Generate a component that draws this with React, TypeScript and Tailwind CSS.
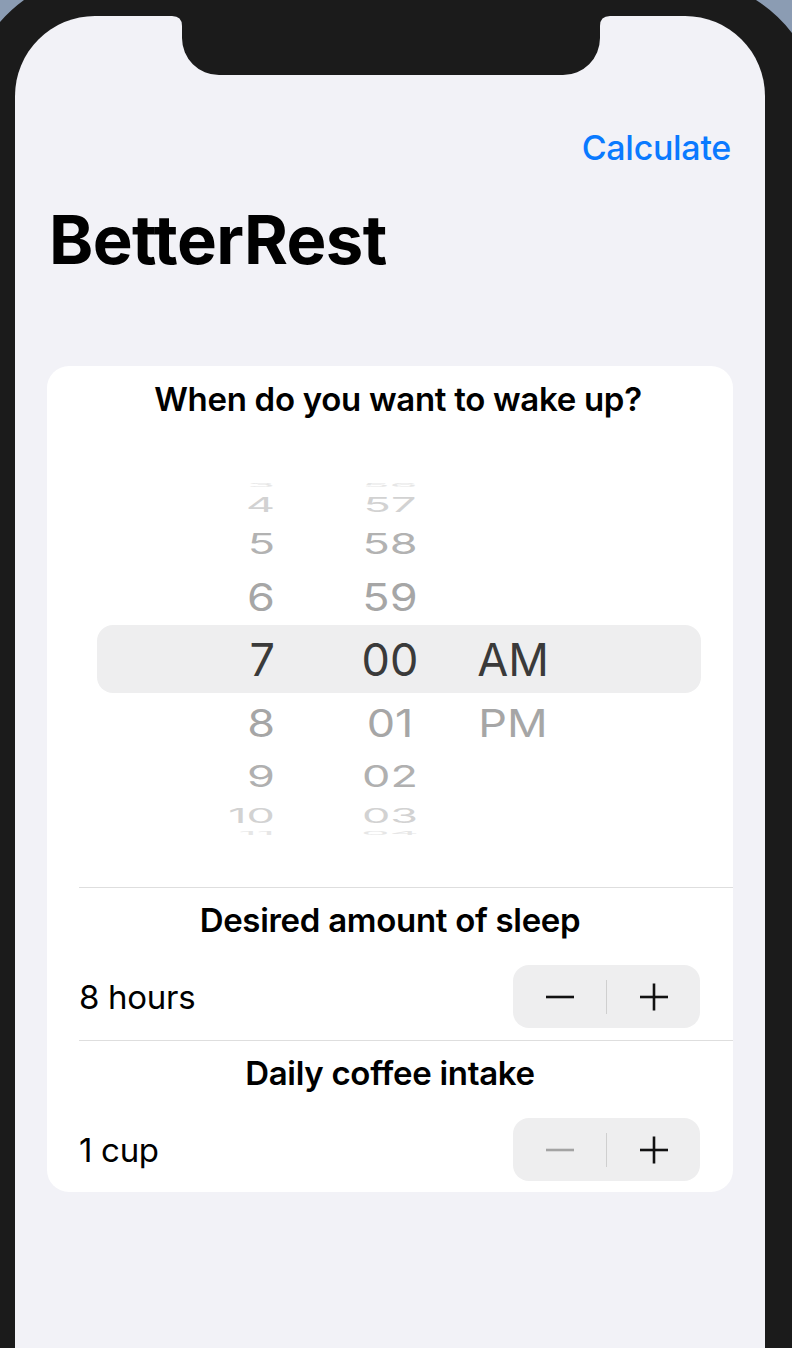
import React from "react";

const font = "font-[family-name:Inter,ui-sans-serif,sans-serif]";

type PickerRow = {
  hour: string;
  minute: string;
  period: string;
  height: string;
  scale: string;
  color: string;
};

const rows: PickerRow[] = [
  { hour: "3", minute: "56", period: "", height: "h-[8px]", scale: "scale-y-[0.12]", color: "text-[#e6e6e6]" },
  { hour: "4", minute: "57", period: "", height: "h-[30px]", scale: "scale-y-[0.45]", color: "text-[#d2d2d2]" },
  { hour: "5", minute: "58", period: "", height: "h-[48px]", scale: "scale-y-[0.64]", color: "text-[#b2b2b2]" },
  { hour: "6", minute: "59", period: "", height: "h-[58px]", scale: "scale-y-[0.85]", color: "text-[#a6a6a6]" },
  { hour: "7", minute: "00", period: "AM", height: "h-[68px]", scale: "scale-y-100", color: "text-[#3a3a3a]" },
  { hour: "8", minute: "01", period: "PM", height: "h-[58px]", scale: "scale-y-[0.85]", color: "text-[#a6a6a6]" },
  { hour: "9", minute: "02", period: "", height: "h-[50px]", scale: "scale-y-[0.66]", color: "text-[#b0b0b0]" },
  { hour: "10", minute: "03", period: "", height: "h-[28px]", scale: "scale-y-[0.44]", color: "text-[#d2d2d2]" },
  { hour: "11", minute: "04", period: "", height: "h-[8px]", scale: "scale-y-[0.12]", color: "text-[#e6e6e6]" },
];

function WheelPicker() {
  return (
    <div className="mt-[62px] flex flex-col">
      {rows.map((row, i) => (
        <div
          key={row.hour}
          className={`ml-[50px] mr-[32px] flex items-center text-[45px] leading-none ${row.height} ${row.color} ${
            i === 4 ? "rounded-[16px] bg-[#eeeeef]" : ""
          }`}
        >
          <span className={`block w-[178px] text-right ${row.scale}`}>{row.hour}</span>
          <span className={`ml-[55px] block w-[120px] text-center ${row.scale}`}>{row.minute}</span>
          <span className={`ml-[3px] block w-[120px] text-center ${row.scale}`}>{row.period}</span>
        </div>
      ))}
    </div>
  );
}

function Stepper({ minusDisabled }: { minusDisabled?: boolean }) {
  return (
    <div className="flex h-[63px] w-[187px] items-center rounded-[16px] bg-[#eeeeef]">
      <div className="flex flex-1 justify-center">
        <svg width="30" height="30" viewBox="0 0 30 30">
          <line
            x1="1"
            y1="15"
            x2="29"
            y2="15"
            stroke={minusDisabled ? "#a3a3a3" : "#111"}
            strokeWidth="2.6"
          />
        </svg>
      </div>
      <div className="h-[34px] w-px bg-[#cfcfcf]" />
      <div className="flex flex-1 justify-center">
        <svg width="30" height="30" viewBox="0 0 30 30">
          <line x1="1" y1="15" x2="29" y2="15" stroke="#111" strokeWidth="2.6" />
          <line x1="15" y1="1.5" x2="15" y2="28.5" stroke="#111" strokeWidth="2.6" />
        </svg>
      </div>
    </div>
  );
}

function Section({ title, value, minusDisabled }: { title: string; value: string; minusDisabled?: boolean }) {
  return (
    <div>
      <h2 className="mt-[12px] text-center text-[33px] font-semibold leading-[40px] tracking-[-0.3px] text-black">
        {title}
      </h2>
      <div className="mt-[25px] flex items-center justify-between pl-[32px] pr-[33px]">
        <span className="text-[33px] leading-[40px] tracking-[-0.3px] text-black">{value}</span>
        <Stepper minusDisabled={minusDisabled} />
      </div>
    </div>
  );
}

export default function App() {
  return (
    <div className={`relative h-[1348px] w-[792px] overflow-hidden bg-[#1b1b1b] pl-[15px] pr-[27px] pt-[16px] ${font}`}>
      {/* bezel corners */}
      <svg className="absolute left-0 top-0" width="40" height="40" viewBox="0 0 40 40">
        <path d="M0,0 L24,0 A140,140 0 0 0 0,22 Z" fill="#8b9cb3" />
      </svg>
      <svg className="absolute right-0 top-0" width="40" height="40" viewBox="752 0 40 40">
        <path d="M792,0 L756,0 A140,140 0 0 1 792,33 Z" fill="#8b9cb3" />
      </svg>

      <div className="relative h-full rounded-t-[80px] bg-[#f2f2f7]">
        {/* notch */}
        <svg className="absolute left-0 top-0" width="750" height="60" viewBox="0 0 750 60">
          <path
            d="M157,0 Q167,0 167,10 L167,22 A37,37 0 0 0 204,59 L548,59 A37,37 0 0 0 585,22 L585,10 Q585,0 595,0 Z"
            fill="#1b1b1b"
          />
        </svg>

        <div className="pt-[112px]">
          {/* Nav */}
          <div className="flex h-[40px] items-center justify-end pr-[34px]">
            <button className="text-[34px] font-medium leading-[40px] tracking-[-0.3px] text-[#0a7aff]">
              Calculate
            </button>
          </div>

          <h1 className="mt-[38px] pl-[34px] text-[67px] font-bold leading-none tracking-[-0.6px] text-black">
            BetterRest
          </h1>

          {/* Form */}
          <div className="mx-[32px] mt-[93px] rounded-[22px] bg-white pb-[11px] pt-[13px]">
            <h2 className="pl-[16px] text-center text-[33px] font-semibold leading-[40px] tracking-[-0.3px] text-black">
              When do you want to wake up?
            </h2>
            <WheelPicker />
            <div className="ml-[32px] mt-[50px] h-px bg-[#dedede]" />

            <Section title="Desired amount of sleep" value="8 hours" />
            <div className="ml-[32px] mt-[12px] h-px bg-[#dedede]" />
            <Section title="Daily coffee intake" value="1 cup" minusDisabled />
          </div>
        </div>
      </div>
    </div>
  );
}
